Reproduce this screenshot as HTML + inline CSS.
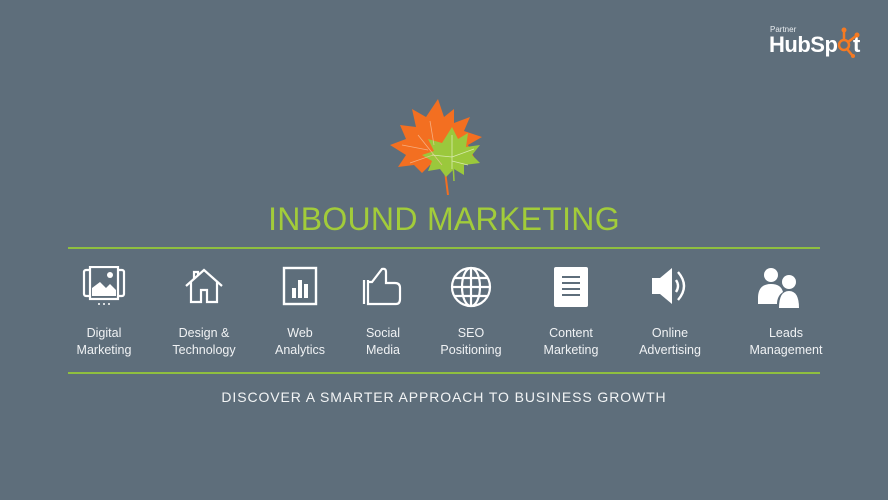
<!DOCTYPE html>
<html><head><meta charset="utf-8"><style>
body{margin:0;width:888px;height:500px;background:#5e6e7b;position:relative;overflow:hidden;font-family:"Liberation Sans",sans-serif;color:#fff}
.abs{position:absolute}
.title{left:0;width:888px;top:199px;text-align:center;font-size:32px;color:#a2cc3a;letter-spacing:0.3px;line-height:40px}
.line{left:68px;width:752px;height:2px;background:#8fbf3f}
.lbl{width:120px;text-align:center;font-size:12.5px;line-height:17px;top:325px;color:#f0f2f4}
.tag{left:0;width:888px;top:389px;text-align:center;font-size:14px;letter-spacing:0.9px;color:#f2f4f5}
svg.ic{position:absolute;top:266px}
</style></head><body>
<div class="abs" style="left:770px;top:25px;font-size:8px;color:#e8ecef">Partner</div>
<div class="abs" style="left:769px;top:32px;font-size:22px;font-weight:bold;letter-spacing:-0.5px">HubSp</div>
<div class="abs" style="left:853px;top:32px;font-size:22px;font-weight:bold">t</div>
<svg class="abs" style="left:836px;top:26px" width="26" height="34" viewBox="0 0 26 34"><g stroke="#f57a22" stroke-width="2.5" fill="none"><circle cx="8" cy="19" r="5"/><line x1="8" y1="14" x2="8" y2="5"/><line x1="12" y1="16" x2="20" y2="10"/><line x1="11" y1="23" x2="16" y2="29"/></g><circle cx="8" cy="4" r="2.5" fill="#f57a22"/><circle cx="21" cy="9" r="2.5" fill="#f57a22"/><circle cx="17" cy="30" r="2" fill="#f57a22"/></svg>

<svg class="abs" style="left:388px;top:95px" width="104" height="100" viewBox="0 0 104 100">
<path d="M50 4 L56 22 L66 14 L66 28 L82 22 L76 36 L94 42 L80 50 L86 62 L68 60 L66 74 L56 66 L54 72 L42 70 L34 78 L26 70 L10 72 L18 60 L2 50 L18 44 L12 30 L28 32 L24 14 L38 22 Z" fill="#f36f21"/>
<path d="M60 100 L56 68" stroke="#f36f21" stroke-width="2"/>
<path d="M64 32 L70 44 L80 38 L78 52 L92 50 L84 60 L92 68 L76 70 L76 80 L66 74 L58 82 L52 74 L40 76 L44 66 L34 60 L46 56 L40 44 L54 48 Z" fill="#9bc83c"/>
<path d="M64 48 L66 86" stroke="#9bc83c" stroke-width="1.5"/>
<g stroke="#f6c9a8" stroke-width="0.8" fill="none" opacity=".7"><path d="M54 70 L30 40 M40 55 L14 50 M45 60 L22 68 M46 50 L42 26"/></g>
<g stroke="#e6f2c8" stroke-width="0.8" fill="none" opacity=".8"><path d="M64 74 L64 40 M64 62 L86 54 M64 62 L44 60 M64 66 L80 70"/></g>
</svg>

<div class="abs title">INBOUND MARKETING</div>
<div class="abs line" style="top:247px"></div>
<div class="abs line" style="top:372px"></div>

<svg class="ic" style="left:82px" width="44" height="40" viewBox="0 0 44 40" fill="none" stroke="#fff" stroke-width="2.2"><rect x="2" y="4" width="40" height="26" rx="2"/><rect x="8" y="1" width="28" height="32" fill="#5e6e7b"/><path d="M10 30 L10 22 L18 16 L24 22 L28 18 L34 24 L34 30 Z" fill="#fff" stroke="none"/><circle cx="28" cy="9" r="3" fill="#fff" stroke="none"/><g fill="#fff" stroke="none"><circle cx="17" cy="38" r="1"/><circle cx="22" cy="38" r="1"/><circle cx="27" cy="38" r="1"/></g></svg>
<svg class="ic" style="left:184px" width="40" height="40" viewBox="0 0 40 40" fill="none" stroke="#fff" stroke-width="2.2"><path d="M2 20 L20 4 L38 20 M7 16 V36 H17 V24 H23 V36 H33 V16 M10 13 V6 H14 V9"/></svg>
<svg class="ic" style="left:282px" width="36" height="40" viewBox="0 0 36 40"><rect x="2" y="2" width="32" height="36" fill="none" stroke="#fff" stroke-width="2.4"/><rect x="10" y="22" width="4" height="10" fill="#fff"/><rect x="16" y="14" width="4" height="18" fill="#fff"/><rect x="22" y="18" width="4" height="14" fill="#fff"/></svg>
<svg class="ic" style="left:362px" width="42" height="40" viewBox="0 0 42 40" fill="none" stroke="#fff" stroke-width="2.2"><path d="M2 14 V38 M6 14 V38 L34 38 Q38 38 38 33 L38 22 Q38 17 33 17 L24 17 L24 6 Q24 2 20 3 L10 16 L6 16"/></svg>
<svg class="ic" style="left:450px" width="42" height="42" viewBox="0 0 42 42" fill="none" stroke="#fff" stroke-width="2.2"><circle cx="21" cy="21" r="19"/><ellipse cx="21" cy="21" rx="9" ry="19"/><line x1="21" y1="2" x2="21" y2="40"/><line x1="2" y1="21" x2="40" y2="21"/><path d="M5 12 H37 M5 30 H37"/></svg>
<svg class="ic" style="left:553px" width="36" height="42" viewBox="0 0 36 42"><rect x="1" y="1" width="34" height="40" rx="2" fill="#fff"/><g stroke="#5e6e7b" stroke-width="2"><path d="M9 11 H27 M9 17 H27 M9 23 H27 M9 29 H27"/></g></svg>
<svg class="ic" style="left:650px" width="40" height="40" viewBox="0 0 40 40"><path d="M2 12 H10 L22 2 V38 L10 28 H2 Z" fill="#fff"/><g fill="none" stroke="#fff" stroke-width="2.4"><path d="M26 14 Q30 20 26 26"/><path d="M28 6 Q40 20 28 34"/></g></svg>
<svg class="ic" style="left:757px" width="44" height="44" viewBox="0 0 44 44" fill="#fff"><circle cx="14" cy="9" r="7"/><path d="M1 32 Q1 18 14 18 Q24 18 26 26 Q20 30 20 38 H1 Z"/><circle cx="32" cy="16" r="7"/><path d="M22 42 Q22 25 32 25 Q42 25 42 42 Z"/></svg>

<div class="abs lbl" style="left:44px">Digital<br>Marketing</div>
<div class="abs lbl" style="left:144px">Design &amp;<br>Technology</div>
<div class="abs lbl" style="left:240px">Web<br>Analytics</div>
<div class="abs lbl" style="left:323px">Social<br>Media</div>
<div class="abs lbl" style="left:411px">SEO<br>Positioning</div>
<div class="abs lbl" style="left:511px">Content<br>Marketing</div>
<div class="abs lbl" style="left:610px">Online<br>Advertising</div>
<div class="abs lbl" style="left:726px">Leads<br>Management</div>

<div class="abs tag">DISCOVER A SMARTER APPROACH TO BUSINESS GROWTH</div>
</body></html>
